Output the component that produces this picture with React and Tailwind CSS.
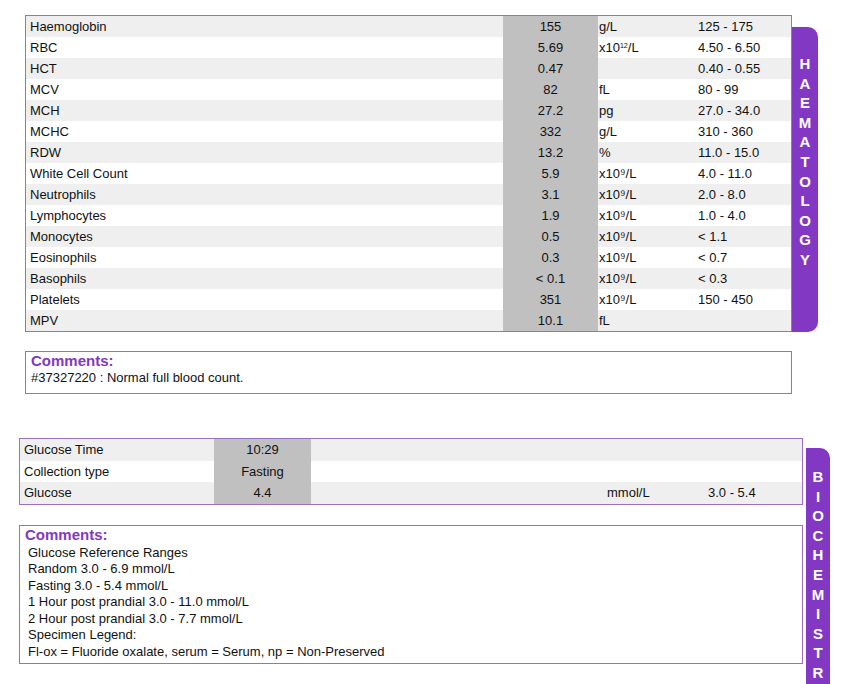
const F = { fontFamily: '"Liberation Sans", Arial, sans-serif' };
const haem = [
  ["Haemoglobin","155","g/L","125 - 175"],
  ["RBC","5.69",<>x10<sup className="text-[7px]">12</sup>/L</>,"4.50 - 6.50"],
  ["HCT","0.47","","0.40 - 0.55"],
  ["MCV","82","fL","80 - 99"],
  ["MCH","27.2","pg","27.0 - 34.0"],
  ["MCHC","332","g/L","310 - 360"],
  ["RDW","13.2","%","11.0 - 15.0"],
  ["White Cell Count","5.9","x10⁹/L","4.0 - 11.0"],
  ["Neutrophils","3.1","x10⁹/L","2.0 - 8.0"],
  ["Lymphocytes","1.9","x10⁹/L","1.0 - 4.0"],
  ["Monocytes","0.5","x10⁹/L","< 1.1"],
  ["Eosinophils","0.3","x10⁹/L","< 0.7"],
  ["Basophils","< 0.1","x10⁹/L","< 0.3"],
  ["Platelets","351","x10⁹/L","150 - 450"],
  ["MPV","10.1","fL",""],
];
const bio = [
  ["Glucose Time","10:29","",""],
  ["Collection type","Fasting","",""],
  ["Glucose","4.4","mmol/L","3.0 - 5.4"],
];
function Tab({ word, cls }) {
  return (
    <div className={"bg-[#8338c4] rounded-r-[10px] flex flex-col items-center text-white font-bold text-[15px] leading-[19.6px] " + cls}>
      {word.split("").map((c, i) => <div key={i}>{c}</div>)}
    </div>
  );
}
export default function App() {
  return (
    <div style={F} className="w-[858px] h-[684px] bg-white text-[13px] text-[#111] overflow-hidden">
      <div className="flex pt-[15px] pl-[25px]">
        <div className="w-[767px] border border-[#9b6fc7]">
          {haem.map((r, i) => (
            <div key={i} className={"flex h-[21px] items-center " + (i % 2 === 0 ? "bg-[#efefef]" : "bg-white")}>
              <div className="w-[477px] pl-[4px]">{r[0]}</div>
              <div className="w-[95px] h-full bg-[#c0c0c0] flex items-center justify-center">{r[1]}</div>
              <div className="w-[100px] pl-[1px]">{r[2]}</div>
              <div className="flex-1">{r[3]}</div>
            </div>
          ))}
        </div>
        <Tab word="HAEMATOLOGY" cls="mt-[12px] w-[26px] h-[305px] pt-[27px]" />
      </div>
      <div className="ml-[25px] mt-[19px] w-[767px] h-[43px] border border-[#9b6fc7] px-[5px]">
        <div className="text-[#8338c4] font-bold text-[15px] leading-[18px]">Comments:</div>
        <div className="leading-[16px]">#37327220 : Normal full blood count.</div>
      </div>
      <div className="flex mt-[44px] pl-[19px]">
        <div className="w-[784px]">
          <div className="border border-[#9b6fc7]">
            {bio.map((r, i) => (
              <div key={i} className={"flex h-[21.5px] items-center " + (i % 2 === 0 ? "bg-[#efefef]" : "bg-white")}>
                <div className="w-[194px] pl-[4px]">{r[0]}</div>
                <div className="w-[97px] h-full bg-[#c0c0c0] flex items-center justify-center">{r[1]}</div>
                <div className="w-[296px]"></div>
                <div className="w-[101px]">{r[2]}</div>
                <div className="flex-1">{r[3]}</div>
              </div>
            ))}
          </div>
          <div className="mt-[20px] h-[139px] border border-[#9b6fc7] px-[5px]">
            <div className="text-[#8338c4] font-bold text-[15px] leading-[18px]">Comments:</div>
            <div className="pl-[3px] pt-[1px] leading-[16.5px]">
              <div>Glucose Reference Ranges</div>
              <div>Random 3.0 - 6.9 mmol/L</div>
              <div>Fasting 3.0 - 5.4 mmol/L</div>
              <div>1 Hour post prandial 3.0 - 11.0 mmol/L</div>
              <div>2 Hour post prandial 3.0 - 7.7 mmol/L</div>
              <div>Specimen Legend:</div>
              <div>Fl-ox = Fluoride oxalate, serum = Serum, np = Non-Preserved</div>
            </div>
          </div>
        </div>
        <Tab word="BIOCHEMISTRY" cls="ml-[3px] mt-[10px] w-[24px] h-[260px] pt-[19px]" />
      </div>
    </div>
  );
}
